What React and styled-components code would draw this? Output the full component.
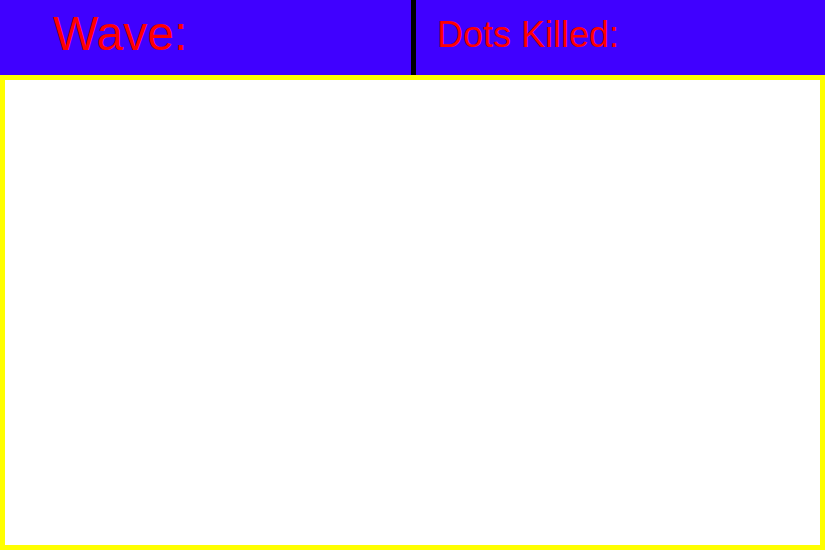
import React from "react";
import styled, { createGlobalStyle } from "styled-components";

const GlobalStyle = createGlobalStyle`
  html, body {
    margin: 0;
    padding: 0;
    background: #ffffff;
    font-family: "Liberation Sans", Arial, sans-serif;
  }
`;

const Page = styled.div`
  display: flex;
  flex-direction: column;
  width: 825px;
  height: 550px;
`;

const Header = styled.div`
  display: flex;
  height: 75px;
  background: #4000ff;
`;

const Cell = styled.div`
  box-sizing: border-box;
  width: ${props => props.width}px;
  padding-left: ${props => props.padLeft}px;
  padding-top: ${props => props.padTop}px;
  border-right: ${props => props.divider ? "5px solid #000" : "none"};
  color: #ff0000;
  font-size: ${props => props.size}px;
  line-height: ${props => props.size}px;
`;

const Board = styled.div`
  box-sizing: border-box;
  flex: 1;
  background: #ffffff;
  border: 5px solid #ffff00;
`;

export default function App() {
  return (
    <>
      <GlobalStyle />
      <Page>
        <Header>
          <Cell width={416} padLeft={53} padTop={10} size={48} divider>
            Wave:
          </Cell>
          <Cell width={409} padLeft={21} padTop={17} size={36}>
            Dots Killed:
          </Cell>
        </Header>
        <Board />
      </Page>
    </>
  );
}
